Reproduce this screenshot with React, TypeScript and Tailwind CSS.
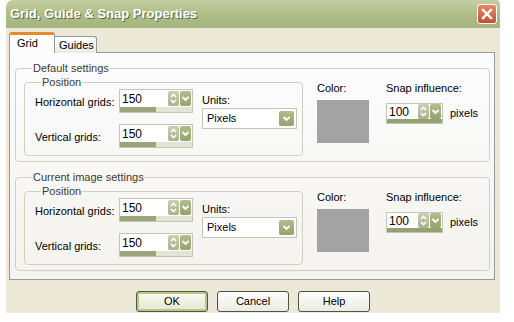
import type { ReactNode } from 'react';

function SpinButtons() {
  return (
    <div className="flex gap-[1px] pr-[1px]">
      <div className="w-[11px] h-[15px] rounded-[2px] bg-gradient-to-b from-[#c9cfb4] to-[#a9b28e] flex items-center justify-center">
        <svg width="11" height="15" viewBox="0 0 11 15">
          <path d="M3 6 L5.5 3.5 L8 6" fill="none" stroke="#fff" strokeWidth="1.6" />
          <path d="M3 9 L5.5 11.5 L8 9" fill="none" stroke="#fff" strokeWidth="1.6" />
        </svg>
      </div>
      <div className="w-[11px] h-[15px] rounded-[2px] bg-gradient-to-b from-[#b0bd8c] to-[#93a36f] flex items-center justify-center">
        <svg width="11" height="15" viewBox="0 0 11 15">
          <path d="M2.5 6 L5.5 9 L8.5 6" fill="none" stroke="#fff" strokeWidth="1.8" />
        </svg>
      </div>
    </div>
  );
}

function GridSpin({ value }: { value: string }) {
  return (
    <div className="w-[74px] h-[24px] flex flex-col border border-[#c3c6b2] bg-white">
      <div className="flex-1 flex items-center">
        <span className="flex-1 pl-[2px] text-[12px] leading-none text-black">{value}</span>
        <SpinButtons />
      </div>
      <div className="h-[5px] flex bg-[#e2e4d4]">
        <div className="w-[36px] bg-[#98a67a]" />
      </div>
    </div>
  );
}

function SnapSpin({ value }: { value: string }) {
  return (
    <div className="w-[57px] h-[21px] flex flex-col border border-[#c3c6b2] bg-white">
      <div className="flex-1 flex items-center">
        <span className="flex-1 pl-[2px] text-[12px] leading-none text-black">{value}</span>
        <SpinButtons />
      </div>
      <div className="h-[4px] bg-[#93a270]" />
    </div>
  );
}

function Dropdown({ value }: { value: string }) {
  return (
    <div className="w-[95px] h-[21px] flex items-center border border-[#c3c6b2] bg-white">
      <span className="flex-1 pl-[4px] text-[11px] text-black">{value}</span>
      <div className="w-[15px] h-[15px] mr-[2px] rounded-[2px] bg-gradient-to-b from-[#b0bd8c] to-[#93a36f] flex items-center justify-center">
        <svg width="15" height="15" viewBox="0 0 15 15">
          <path d="M4.5 6 L7.5 9 L10.5 6" fill="none" stroke="#fff" strokeWidth="1.8" />
        </svg>
      </div>
    </div>
  );
}

function Group({ title, children }: { title: string; children?: ReactNode }) {
  return (
    <fieldset className="w-[475px] h-[100px] border border-[#d0d0bf] rounded-[4px] pl-[8px] pr-[4px]">
      <legend className="ml-[8px] px-[1px] text-[11px] leading-[12px] text-[#3c3c30]">{title}</legend>
      <div className="flex mt-[2px]">
        <fieldset className="w-[279px] h-[80px] border border-[#d0d0bf] rounded-[4px] pl-[10px] pr-[4px]">
          <legend className="ml-[6px] px-[1px] text-[11px] leading-[12px] text-[#3c3c30]">Position</legend>
          <div className="flex pt-[1px]">
            <div className="flex flex-col gap-[11px]">
              <div className="flex items-center">
                <span className="w-[84px] text-[11px] text-black pt-[2px]">Horizontal grids:</span>
                <GridSpin value="150" />
              </div>
              <div className="flex items-center">
                <span className="w-[84px] text-[11px] text-black pt-[2px]">Vertical grids:</span>
                <GridSpin value="150" />
              </div>
            </div>
            <div className="ml-[9px] flex flex-col pt-[5px]">
              <span className="text-[11px] leading-[13px] text-black">Units:</span>
              <div className="mt-[1px]">
                <Dropdown value="Pixels" />
              </div>
            </div>
          </div>
        </fieldset>
        <div className="ml-[14px] flex flex-col pt-[6px]">
          <span className="text-[11px] leading-[13px] text-black">Color:</span>
          <div className="mt-[5px] w-[52px] h-[43px] bg-[#a3a3a3]" />
        </div>
        <div className="ml-[17px] flex flex-col pt-[6px]">
          <span className="text-[11px] leading-[13px] text-black">Snap influence:</span>
          <div className="mt-[8px] flex items-center">
            <SnapSpin value="100" />
            <span className="ml-[7px] text-[11px] text-black">pixels</span>
          </div>
        </div>
      </div>
      {children}
    </fieldset>
  );
}

function XpButton({ label, primary }: { label: string; primary?: boolean }) {
  return (
    <div
      className={
        primary
          ? 'w-[72px] h-[21px] rounded-[3px] border border-[#4e5a3c] bg-gradient-to-b from-[#fbfcf4] to-[#e4e8d2] shadow-[inset_0_0_0_2px_#b7c58f] flex items-center justify-center text-[11px] text-black'
          : 'w-[72px] h-[21px] rounded-[3px] border border-[#4e5442] bg-gradient-to-b from-[#fefefd] to-[#ebeae3] flex items-center justify-center text-[11px] text-black'
      }
    >
      {label}
    </div>
  );
}

export default function App() {
  return (
    <div className="w-[514px] h-[322px] bg-white font-['Liberation_Sans',Arial,sans-serif]">
      <div className="ml-[6px] w-[494px]">
        <div className="h-[28px] rounded-tl-[7px] rounded-tr-[4px] bg-gradient-to-b from-[#c4cfa2] via-[#afbe88] to-[#a4b47e] flex items-center pl-[4px] pr-[3px]">
          <span className="flex-1 text-[13px] font-bold text-white [text-shadow:1px_1px_0_#5e6b3e]">
            Grid, Guide &amp; Snap Properties
          </span>
          <div className="w-[20px] h-[20px] rounded-[3px] border border-white bg-gradient-to-b from-[#e8886a] to-[#c2502f] flex items-center justify-center">
            <svg width="14" height="14" viewBox="0 0 14 14">
              <path d="M3 3 L11 11 M11 3 L3 11" stroke="#fff" strokeWidth="2.4" strokeLinecap="square" />
            </svg>
          </div>
        </div>
        <div className="h-[285px] bg-[#ece9d8] pt-[4px] pl-[3px]">
          <div className="flex items-end relative z-10">
            <div className="w-[46px] h-[21px] bg-[#fcfcfb] border border-b-0 border-[#919b9c] border-t-[3px] border-t-[#e68b2c] rounded-t-[3px] pl-[7px] text-[11px] leading-[16px] text-black">
              Grid
            </div>
            <div className="w-[42px] h-[17px] bg-gradient-to-b from-white to-[#ecebe6] border border-l-0 border-b-0 border-[#919b9c] rounded-tr-[3px] pl-[4px] text-[11px] leading-[16px] text-black">
              Guides
            </div>
          </div>
          <div className="-mt-[1px] w-[486px] h-[228px] border border-[#919b9c] bg-gradient-to-b from-[#fcfcfe] to-[#f4f3ee] pl-[5px] pt-[9px] flex flex-col gap-[9px]">
            <Group title="Default settings" />
            <Group title="Current image settings" />
          </div>
          <div className="mt-[11px] flex justify-center gap-[9px] pr-[3px]">
            <XpButton label="OK" primary />
            <XpButton label="Cancel" />
            <XpButton label="Help" />
          </div>
        </div>
      </div>
    </div>
  );
}
